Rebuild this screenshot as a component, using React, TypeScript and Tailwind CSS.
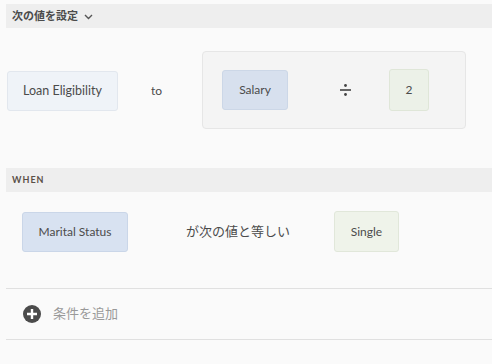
import React from "react";

const font = { fontFamily: 'Lato, "Noto Sans CJK JP", sans-serif' };

export default function App() {
  return (
    <div className="w-[492px] h-[364px] bg-[#fafafa] overflow-hidden text-[#4b4b4b]" style={font}>
      <div className="pl-[6px] pt-[4px]">
        {/* header */}
        <div className="h-[24px] bg-[#eeeeee] flex items-center pl-[6px] gap-[6px]">
          <span className="text-[11px] font-bold text-[#4b4b4b]">次の値を設定</span>
          <svg width="9" height="6" viewBox="0 0 9 6" className="mt-[1px]">
            <path d="M1 1 L4.5 4.5 L8 1" fill="none" stroke="#555" strokeWidth="1.4" />
          </svg>
        </div>

        {/* row 1 */}
        <div className="h-[140px] flex items-start pt-[23px]">
          <div className="mt-[20px] ml-[1px] w-[111px] h-[40px] rounded-[3px] bg-[#eff3f8] border border-[#e2e7ee] flex items-center justify-center text-[12.5px]">
            Loan Eligibility
          </div>
          <div className="mt-[20px] w-[77px] h-[40px] flex items-center justify-center text-[12px]">to</div>
          <div className="ml-[7px] w-[264px] h-[78px] rounded-[4px] bg-[#f4f4f4] border border-[#e6e6e6] flex items-center pl-[19px]">
            <div className="w-[66px] h-[40px] rounded-[3px] bg-[#d7e0ee] border border-[#ccd7e7] flex items-center justify-center text-[12px]">
              Salary
            </div>
            <div className="w-[101px] pl-[14px] flex items-center justify-center">
              <svg width="11" height="12" viewBox="0 0 11 12">
                <circle cx="5.5" cy="1.5" r="1.4" fill="#444" />
                <rect x="0" y="5.2" width="11" height="1.6" fill="#444" />
                <circle cx="5.5" cy="10.5" r="1.4" fill="#444" />
              </svg>
            </div>
            <div className="w-[40px] h-[42px] rounded-[3px] bg-[#ecf1e8] border border-[#dfe6d8] flex items-center justify-center text-[12px]">
              2
            </div>
          </div>
        </div>

        {/* WHEN */}
        <div className="h-[24px] bg-[#eeeeee] flex items-center pl-[6px]">
          <span className="text-[9px] font-bold tracking-[1px] text-[#5a5048]">WHEN</span>
        </div>

        {/* row 2 */}
        <div className="h-[97px] flex items-start pt-[19px] border-b border-[#e0e0e0]">
          <div className="mt-[1px] ml-[16px] w-[106px] h-[40px] rounded-[3px] bg-[#d8e2f1] border border-[#cad6e8] flex items-center justify-center text-[12px]">
            Marital Status
          </div>
          <div className="w-[206px] h-[41px] flex items-center pl-[58px] text-[13px] text-[#4b4b4b]">
            が次の値と等しい
          </div>
          <div className="w-[65px] h-[41px] rounded-[3px] bg-[#eff3ea] border border-[#e1e7da] flex items-center justify-center text-[12px]">
            Single
          </div>
        </div>

        {/* add condition */}
        <div className="h-[51px] flex items-center pl-[17px] gap-[12px] border-b border-[#e0e0e0]">
          <svg width="18" height="18" viewBox="0 0 18 18">
            <circle cx="9" cy="9" r="9" fill="#4b4b4b" />
            <path d="M9 4 V14 M4 9 H14" stroke="#fff" strokeWidth="2.4" />
          </svg>
          <span className="text-[13px] text-[#999999]">条件を追加</span>
        </div>
      </div>
    </div>
  );
}
